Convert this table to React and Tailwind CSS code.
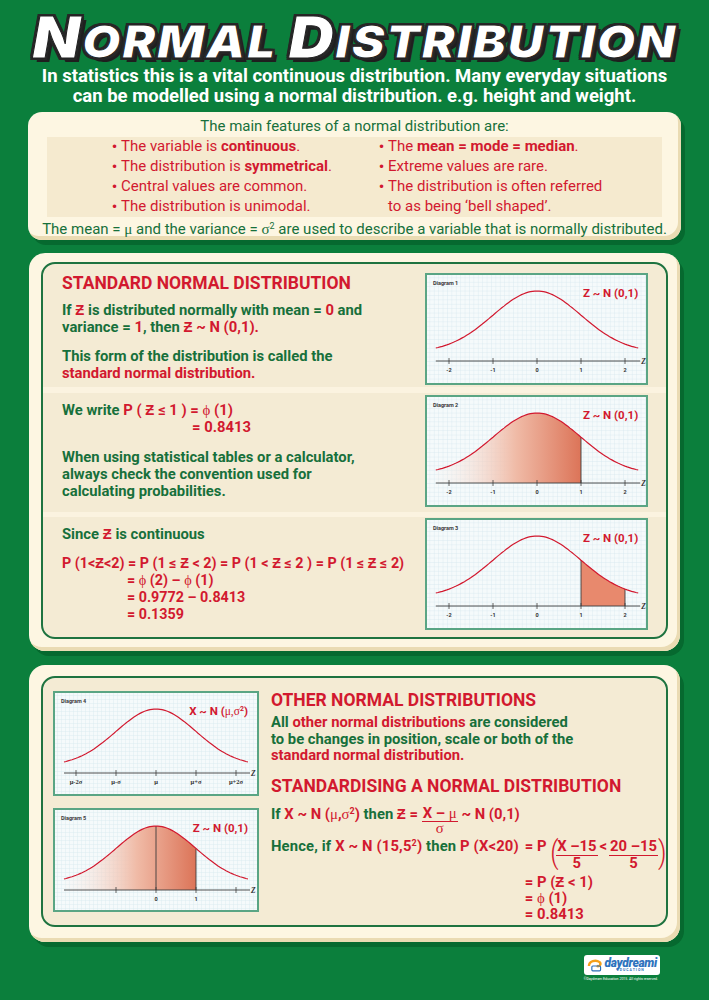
import React from 'react';

const G = 'text-[#17703b]';
const R = 'text-[#d2192f]';
const SERIF = "[font-family:'Liberation_Serif',serif] font-normal";

const Zs = () => <span className={R}>Ƶ</span>;
const Mu = () => <span className={SERIF}>μ</span>;
const Sig = () => <span className={SERIF}>σ</span>;
const Phi = () => <span className={SERIF}>ϕ</span>;
const Sq = () => <span className="relative -top-[5px] text-[9px]">2</span>;
const Dot = () => <span className="[font-family:'DejaVu_Sans',sans-serif] text-[12px] mr-[3px]">•</span>;

function Diagram({ id, w, h, cx, unit, peak, base, axisY, title, label, ticks, shade, lines = [] }) {
  const amp = base - peak;
  const fx = (z) => cx + z * unit;
  const fy = (z) => base - amp * Math.exp((-z * z) / 2);
  const pts = (a, b) => {
    const out = [];
    for (let z = a; z <= b + 1e-9; z += 0.05) out.push(`${fx(z).toFixed(1)},${fy(z).toFixed(1)}`);
    return out;
  };
  const full = 'M' + pts(-2.3, 2.3).join(' L');
  let area = null;
  if (shade) {
    area = `M${fx(shade.a).toFixed(1)},${axisY} L${pts(shade.a, shade.b).join(' L')} L${fx(shade.b).toFixed(1)},${axisY} Z`;
  }
  const s = unit / 10;
  const right = fx(2.3);
  return (
    <div className="border-2 border-[#5aa584] bg-[#f5fafb]" style={{ width: w, height: h }}>
      <svg width={w - 4} height={h - 4} className="block">
        <defs>
          <pattern id={`${id}-p`} width={s} height={s} patternUnits="userSpaceOnUse">
            <path d={`M ${s} 0 L 0 0 0 ${s}`} fill="none" stroke="#cde3eb" strokeWidth="0.6" />
          </pattern>
          <linearGradient id={`${id}-g`} x1="0" x2="1" y1="0" y2="0">
            <stop offset="0" stopColor="#fbeee8" stopOpacity="0.1" />
            <stop offset="0.55" stopColor="#f0bba7" />
            <stop offset="1" stopColor="#dc7458" />
          </linearGradient>
        </defs>
        <g transform="translate(-2,-2)">
          <rect x="0" y="0" width={w} height={h} fill={`url(#${id}-p)`} />
          {area && <path d={area} fill={shade.grad ? `url(#${id}-g)` : '#e8896d'} />}
          {lines.map((z) => (
            <line key={z} x1={fx(z)} x2={fx(z)} y1={fy(z)} y2={axisY} stroke="#3d3d3d" strokeWidth="0.9" />
          ))}
          <path d={full} fill="none" stroke="#d2192f" strokeWidth="1.2" />
          <line x1={fx(-2.3)} x2={right + 2} y1={axisY} y2={axisY} stroke="#3d3d3d" strokeWidth="0.9" />
          {ticks.map((t) => (
            <g key={t.z}>
              <line x1={fx(t.z)} x2={fx(t.z)} y1={axisY - 3} y2={axisY + 3} stroke="#3d3d3d" strokeWidth="0.8" />
              {t.t && (
                <text x={fx(t.z)} y={axisY + 11} fontSize={t.serif ? 6.5 : 5.5} textAnchor="middle" fill="#333" fontFamily={t.serif ? 'Liberation Serif, serif' : 'Roboto, sans-serif'}>
                  {t.t}
                </text>
              )}
            </g>
          ))}
          <text x={right + 3} y={axisY + 3} fontSize="7.5" fontStyle="italic" fill="#333" fontFamily="Liberation Serif, serif">Z</text>
          <text x="8" y="12" fontSize="5.5" fontWeight="700" fill="#3a3a3a" fontFamily="Roboto, sans-serif">{title}</text>
          <text x={right} y="24" fontSize="11.5" fontWeight="700" textAnchor="end" fill="#d2192f" fontFamily="Roboto, sans-serif">
            {label}
          </text>
        </g>
      </svg>
    </div>
  );
}

const zTicks = [
  { z: -2, t: '-2' },
  { z: -1, t: '-1' },
  { z: 0, t: '0' },
  { z: 1, t: '1' },
  { z: 2, t: '2' },
];

const big = { w: 223, h: 112, cx: 112, unit: 44, peak: 18, base: 79.4, axisY: 88 };
const small = { w: 206, h: 105, cx: 103, unit: 40, peak: 18, base: 75, axisY: 82 };

const Frac = ({ top, bottom, topLh = 'leading-[16px]', botLh = 'leading-[12px]' }) => (
  <span className="inline-flex flex-col items-center">
    <span className={`${topLh} border-b-[1.5px] border-[#d2192f] px-[1px] whitespace-nowrap`}>{top}</span>
    <span className={botLh}>{bottom}</span>
  </span>
);

const Paren = ({ children }) => (
  <span className="inline-block w-[6px] text-center text-[26px] font-light leading-[34px] -mt-[1px] scale-y-[1.2]">{children}</span>
);

const boxShadow = 'shadow-[inset_-3px_-4px_0_#eadbb3,4px_5px_0_#06692f]';

export default function App() {
  return (
    <div className="w-[709px] h-[1000px] overflow-hidden bg-[#0b7f3c] [font-family:Roboto,sans-serif] pt-[12px]">
      <h1 className="h-[50px] text-center text-white italic font-black [font-family:Inter,sans-serif] text-[46px] leading-[50px] tracking-[1.5px] scale-x-[1.08] [-webkit-text-stroke:1px_#222] [text-shadow:-2px_-2px_0_#262626,2px_-2px_0_#262626,-2px_2px_0_#262626,2px_2px_0_#262626,0_-2px_0_#262626,0_2px_0_#262626,-2px_0_0_#262626,2px_0_0_#262626,4px_4px_0_#1f1f1f]">
        <span className="text-[58px]">N</span>ORMAL <span className="text-[58px]">D</span>ISTRIBUTION
      </h1>

      <p className="mt-[4px] text-center text-white font-bold text-[18.5px] leading-[20px]">
        In statistics this is a vital continuous distribution. Many everyday situations
        <br />
        can be modelled using a normal distribution. e.g. height and weight.
      </p>

      {/* main features */}
      <div className={`mx-[28px] mt-[6px] h-[128px] rounded-[14px] bg-[#fdf6e2] pt-[4px] ${boxShadow}`}>
        <p className={`text-center text-[15px] leading-[20px] ${G}`}>The main features of a normal distribution are:</p>
        <div className={`mx-[19px] mt-[1px] grid grid-cols-[267px_1fr] pl-[64px] bg-[#f5eacf] text-[15px] leading-[19px] ${R}`}>
          <div>
            <p><Dot />The variable is <b>continuous</b>.</p>
            <p><Dot />The distribution is <b>symmetrical</b>.</p>
            <p><Dot />Central values are common.</p>
            <p><Dot />The distribution is unimodal.</p>
          </div>
          <div>
            <p><Dot />The <b>mean = mode = median</b>.</p>
            <p><Dot />Extreme values are rare.</p>
            <p><Dot />The distribution is often referred</p>
            <p className="pl-[10px]">to as being ‘bell shaped’.</p>
          </div>
        </div>
        <p className={`mt-[2px] text-center text-[15px] leading-[20px] ${G}`}>
          The mean = <Mu /> and the variance = <Sig />
          <Sq /> are used to describe a variable that is normally distributed.
        </p>
      </div>

      {/* standard normal distribution */}
      <div className={`mx-[29px] mt-[13px] h-[398px] rounded-[16px] bg-[#fdf6e2] px-[12px] pt-[9px] pb-[12px] ${boxShadow}`}>
        <div className={`h-full rounded-[14px] border-2 border-[#1e7340] bg-[#f4ebd4] overflow-hidden text-[14.8px] font-bold leading-[17px] ${G}`}>
          <div className="flex h-[123px]">
            <div className="flex-1 pl-[19px] pt-[9px]">
              <h2 className={`text-[17.5px] leading-[20px] ${R}`}>STANDARD NORMAL DISTRIBUTION</h2>
              <p className="mt-[9px]">
                If <Zs /> is distributed normally with mean = <span className={R}>0</span> and
                <br />
                variance = <span className={R}>1</span>, then <span className={R}>Ƶ ~ N (0,1).</span>
              </p>
              <p className="mt-[12px]">
                This form of the distribution is called the
                <br />
                <span className={R}>standard normal distribution.</span>
              </p>
            </div>
            <div className="mr-[18px] mt-[9px]">
              <Diagram id="d1" {...big} title="Diagram 1" label="Z ~ N (0,1)" ticks={zTicks} />
            </div>
          </div>
          <div className="h-[6px] bg-[#fbf3e0]" />
          <div className="flex h-[119px]">
            <div className="flex-1 pl-[19px] pt-[9px]">
              <p>
                We write <span className={R}>P ( Ƶ ≤ 1 ) = <Phi /> (1)</span>
              </p>
              <p className={`pl-[130px] ${R}`}>= 0.8413</p>
              <p className="mt-[13px]">
                When using statistical tables or a calculator,
                <br />
                always check the convention used for
                <br />
                calculating probabilities.
              </p>
            </div>
            <div className="mr-[18px] mt-[2px]">
              <Diagram id="d2" {...big} title="Diagram 2" label="Z ~ N (0,1)" ticks={zTicks} shade={{ a: -2.3, b: 1, grad: true }} lines={[1]} />
            </div>
          </div>
          <div className="h-[5px] bg-[#fbf3e0]" />
          <div className="flex h-[120px]">
            <div className="flex-1 pl-[19px] pt-[9px]">
              <p>
                Since <Zs /> is continuous
              </p>
              <div className={`mt-[12px] text-[14.3px] ${R}`}>
                <p>P (1&lt;Ƶ&lt;2) = P (1 ≤ Ƶ &lt; 2) = P (1 &lt; Ƶ ≤ 2 ) = P (1 ≤ Ƶ ≤ 2)</p>
                <p className="pl-[65px]">= <Phi /> (2) – <Phi /> (1)</p>
                <p className="pl-[65px]">= 0.9772 – 0.8413</p>
                <p className="pl-[65px]">= 0.1359</p>
              </div>
            </div>
            <div className="mr-[18px] mt-[1px]">
              <Diagram id="d3" {...big} title="Diagram 3" label="Z ~ N (0,1)" ticks={zTicks} shade={{ a: 1, b: 2 }} lines={[1, 2]} />
            </div>
          </div>
        </div>
      </div>

      {/* other normal distributions */}
      <div className={`mx-[29px] mt-[14px] h-[277px] rounded-[16px] bg-[#fdf6e2] px-[12px] pt-[11px] pb-[15px] ${boxShadow}`}>
        <div className={`flex h-full rounded-[14px] border-2 border-[#1e7340] bg-[#f4ebd4] text-[14.8px] font-bold leading-[17px] ${G}`}>
          <div className="flex flex-col gap-[12px] pl-[10px] pt-[13px]">
            <Diagram
              id="d4"
              {...small}
              title="Diagram 4"
              label={
                <>
                  X ~ N (<tspan fontFamily="Liberation Serif, serif" fontWeight="400">μ,σ</tspan>
                  <tspan fontSize="7" dy="-4">2</tspan>
                  <tspan dy="4">)</tspan>
                </>
              }
              ticks={[
                { z: -2, t: 'μ-2σ', serif: true },
                { z: -1, t: 'μ-σ', serif: true },
                { z: 0, t: 'μ', serif: true },
                { z: 1, t: 'μ+σ', serif: true },
                { z: 2, t: 'μ+2σ', serif: true },
              ]}
            />
            <Diagram
              id="d5"
              {...small}
              h={104}
              title="Diagram 5"
              label="Z ~ N (0,1)"
              ticks={[{ z: -1 }, { z: 0, t: '0' }, { z: 1, t: '1' }, { z: 2 }]}
              shade={{ a: -2.3, b: 1, grad: true }}
              lines={[0, 1]}
            />
          </div>
          <div className="flex-1 pl-[12px] pt-[12px]">
            <h2 className={`text-[17.5px] leading-[20px] ${R}`}>OTHER NORMAL DISTRIBUTIONS</h2>
            <p className="mt-[4px] leading-[16.5px]">
              All <span className={R}>other normal distributions</span> are considered
              <br />
              to be changes in position, scale or both of the
              <br />
              <span className={R}>standard normal distribution.</span>
            </p>
            <h2 className={`mt-[12px] text-[17.5px] leading-[20px] ${R}`}>STANDARDISING A NORMAL DISTRIBUTION</h2>
            <div className="mt-[1px] flex h-[38px] items-start whitespace-nowrap">
              <span className="mt-[9.5px]">
                If{' '}
                <span className={R}>
                  X ~ N (<Mu />,<Sig />
                  <Sq />)
                </span>{' '}
                then <span className={R}>Ƶ =&nbsp;</span>
              </span>
              <span className={`mt-[8px] ${R}`}>
                <Frac top={<>X – <Mu /></>} bottom={<Sig />} />
              </span>
              <span className={`mt-[9.5px] ${R}`}>&nbsp;~ N (0,1)</span>
            </div>
            <div className={`mt-[1px] grid grid-cols-[auto_1fr] ${R}`}>
              <span className="mt-[2px] leading-[17px] whitespace-nowrap tracking-[0.15px] pr-[6px]">
                <span className={G}>Hence, if </span>X ~ N (15,5<Sq />)<span className={G}> then </span>P (X&lt;20)
              </span>
              <div className="flex items-start whitespace-nowrap">
                <span className="mt-[2px] leading-[17px]">= P&nbsp;</span>
                <Paren>(</Paren>
                <span className="mt-[2px]">
                  <Frac top="X –15" bottom="5" topLh="leading-[17px]" botLh="leading-[14px]" />
                </span>
                <span className="mt-[2px] leading-[17px] px-[2px]">&lt;</span>
                <span className="mt-[2px]">
                  <Frac top="20 –15" bottom="5" topLh="leading-[17px]" botLh="leading-[14px]" />
                </span>
                <Paren>)</Paren>
              </div>
              <div className="col-start-2 mt-[4px] leading-[16px]">
                <p>= P (Ƶ &lt; 1)</p>
                <p>= <Phi /> (1)</p>
                <p>= 0.8413</p>
              </div>
            </div>
          </div>
        </div>
      </div>

      {/* logo */}
      <div className="mt-[13px] flex flex-col items-end pr-[49px]">
        <div className="flex h-[20px] w-[76px] items-center gap-[2px] rounded-[3px] bg-white px-[3px]">
          <svg width="16" height="14" viewBox="0 0 16 14">
            <path d="M2 8 C2 3 9 1 13 4 C15 6 13 9 10 8" fill="none" stroke="#f5a01a" strokeWidth="2.5" />
            <rect x="5" y="8" width="9" height="5" rx="1" fill="none" stroke="#2c6fb7" strokeWidth="1.2" />
          </svg>
          <div className="flex flex-col leading-none">
            <span className="text-[12px] font-black italic text-[#2f73bd] tracking-[-0.3px]">daydreami</span>
            <span className="text-[3.5px] font-bold text-[#2f73bd] tracking-[1px] text-center">EDUCATION</span>
          </div>
        </div>
        <p className="mt-[2px] text-[3.5px] text-white mr-[2px]">©Daydream Education 2015. All rights reserved.</p>
      </div>
    </div>
  );
}
